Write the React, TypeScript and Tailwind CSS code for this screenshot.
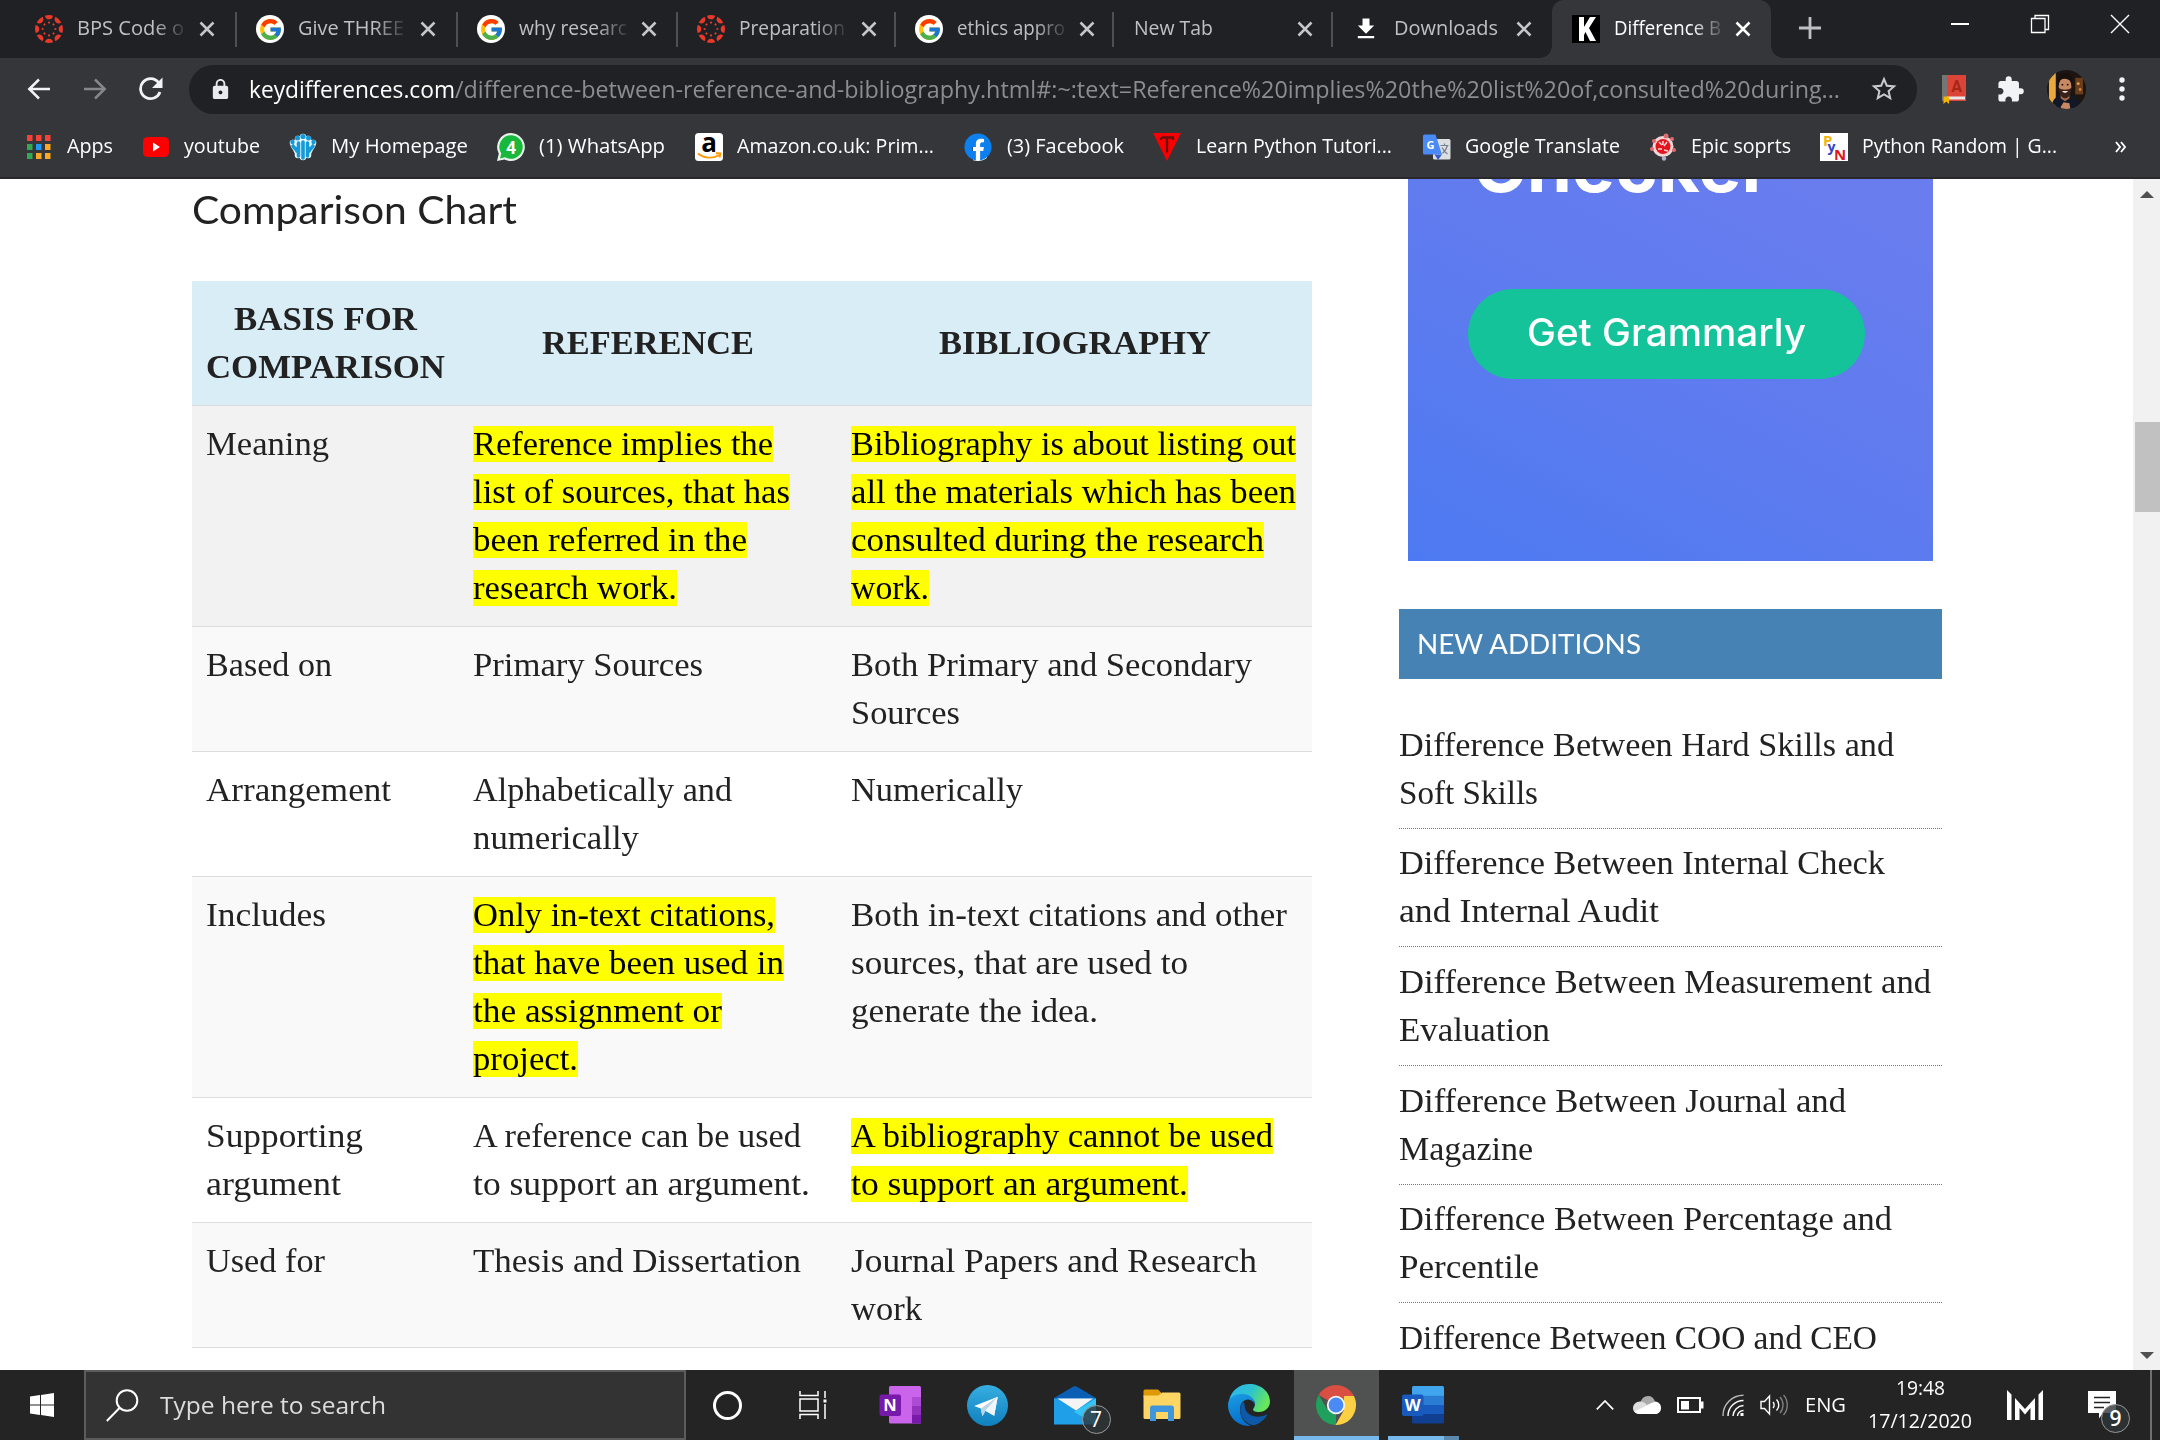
import React, { useLayoutEffect, useRef } from "react";
import { FcGoogle } from "react-icons/fc";
import { FaFacebook } from "react-icons/fa";
import { MdLock, MdStarBorder, MdExtension, MdFileDownload } from "react-icons/md";

/* Single line of text whose glyphs are condensed or expanded to span `w` pixels. */
function Fit({ w, children, className = "" }: { w: number; children: string; className?: string }) {
  const ref = useRef<HTMLSpanElement>(null);
  useLayoutEffect(() => {
    const el = ref.current;
    if (!el) return;
    el.style.transform = "none";
    const natural = el.getBoundingClientRect().width;
    el.style.transform = `scaleX(${w / natural})`;
  }, [w, children]);
  return (
    <span className={`inline-block whitespace-pre text-left ${className}`} style={{ width: w }}>
      <span ref={ref} className="inline-block origin-left">
        {children}
      </span>
    </span>
  );
}

function CanvasIcon() {
  const spokes = [0, 45, 90, 135, 180, 225, 270, 315];
  return (
    <svg viewBox="0 0 28 28" className="size-7">
      <g fill="#e8392b">
        {spokes.map((a) => (
          <g key={a} transform={`rotate(${a} 14 14)`}>
            <path d="M9.900.7a14 14 0 0 1 8.200 0 4.200 4.600 0 0 1-8.200 0z" />
            <circle cx="14" cy="7.600" r="1.100" />
          </g>
        ))}
      </g>
    </svg>
  );
}

function GoogleIcon() {
  return (
    <span className="flex size-7 items-center justify-center rounded-full bg-white">
      <FcGoogle className="size-[25px]" />
    </span>
  );
}

function KIcon() {
  return (
    <svg viewBox="0 0 28 28" className="size-7">
      <rect width="28" height="28" fill="#000" />
      <path d="M7 2h5v10l6-10h6l-7 11 7 13h-6l-4.500-9L12 20v6H7z" fill="#fff" />
    </svg>
  );
}

function Cross({ color }: { color: string }) {
  return (
    <svg viewBox="0 0 16 16" className="size-4 shrink-0">
      <path d="M1.500 1.500l13 13M14.500 1.500l-13 13" stroke={color} strokeWidth="2.500" />
    </svg>
  );
}

const tabs: { text: string; w: number; tab: string; icon: React.ReactNode; fade?: boolean }[] = [
  { text: "BPS Code o", w: 107, tab: "w-[221px]", icon: <CanvasIcon />, fade: true },
  { text: "Give THREE", w: 106, tab: "w-[221px]", icon: <GoogleIcon />, fade: true },
  { text: "why researc", w: 108, tab: "w-[220px]", icon: <GoogleIcon />, fade: true },
  { text: "Preparation", w: 106, tab: "w-[218px]", icon: <CanvasIcon />, fade: true },
  { text: "ethics appro", w: 108, tab: "w-[218px]", icon: <GoogleIcon />, fade: true },
  { text: "New Tab", w: 79, tab: "w-[219px]", icon: null },
  { text: "Downloads", w: 104, tab: "w-[220px]", icon: <MdFileDownload className="size-7 text-white" /> },
];

function TabStrip() {
  return (
    <div className="flex h-[58px] bg-[#202124] pl-[15px] text-[20px] leading-[55px]">
      {tabs.map((t, i) => (
        <div key={t.text} className={`relative flex shrink-0 items-center text-[#bdc1c6] ${t.tab}`}>
          {t.icon && <span className="ml-5 size-7 shrink-0">{t.icon}</span>}
          <span className={t.icon ? "ml-3.5 h-[58px] w-[108px] overflow-hidden" : "ml-[21px] h-[58px] w-[149px]"}>
            <Fit w={t.w} className={t.fade ? "[mask-image:linear-gradient(to_right,#000_72%,rgba(0,0,0,0.15))]" : ""}>
              {t.text}
            </Fit>
          </span>
          <span className="ml-3.5">
            <Cross color="#c4c7cb" />
          </span>
          {i < 6 && <span className="absolute -right-px top-3 h-[35px] w-0.5 bg-[#4e5054]" />}
        </div>
      ))}
      <div className="relative flex w-[219px] shrink-0 items-center rounded-t-[12px] bg-[#35363a] text-white">
        <span className="absolute -left-3 bottom-0 size-3 bg-[radial-gradient(circle_at_0_0,#202124_11.500px,#35363a_12px)]" />
        <span className="absolute -right-3 bottom-0 size-3 bg-[radial-gradient(circle_at_100%_0,#202124_11.500px,#35363a_12px)]" />
        <span className="ml-5">
          <KIcon />
        </span>
        <span className="ml-3.5 h-[58px] w-[108px] overflow-hidden">
          <Fit w={107} className="[mask-image:linear-gradient(to_right,#000_72%,rgba(0,0,0,0.15))]">
            Difference B
          </Fit>
        </span>
        <span className="ml-[13px]">
          <Cross color="#ffffff" />
        </span>
      </div>
      <svg viewBox="0 0 22 22" className="ml-7 mt-[17px] size-[22px]">
        <path d="M11 0v22M0 11h22" stroke="#bdc1c6" strokeWidth="2.800" />
      </svg>
      <div className="ml-auto flex h-12 items-center">
        <span className="flex w-20 justify-center">
          <span className="h-[1.500px] w-[18px] bg-white" />
        </span>
        <span className="flex w-20 justify-center">
          <svg viewBox="0 0 20 20" className="size-5" fill="none" stroke="#fff" strokeWidth="1.300">
            <path d="M1.500 4.500h13.500v14H1.500zM5 4.500v-3h13.500v14H15" />
          </svg>
        </span>
        <span className="flex w-20 justify-center">
          <svg viewBox="0 0 20 20" className="size-5" stroke="#fff" strokeWidth="1.400">
            <path d="M1 1l18 18M19 1L1 19" />
          </svg>
        </span>
      </div>
    </div>
  );
}

function Toolbar() {
  return (
    <div className="flex h-[62px] items-center bg-[#35363a] pl-[27px]">
      <svg viewBox="0 0 24 22" className="h-[22px] w-6" fill="none" stroke="#f1f3f4" strokeWidth="2.500">
        <path d="M23 11H2.500M12 1.500L2.300 11l9.700 9.500" />
      </svg>
      <svg viewBox="0 0 24 22" className="ml-8 h-[22px] w-6" fill="none" stroke="#85878b" strokeWidth="2.500">
        <path d="M1 11h20.500M12 1.500l9.700 9.500-9.700 9.500" />
      </svg>
      <svg viewBox="0 0 26 24" className="ml-[31px] h-6 w-[26px]">
        <path d="M20.500 5.500A10 10 0 1 0 22 15" fill="none" stroke="#f1f3f4" strokeWidth="2.800" />
        <path d="M24.500.5v10.500H14z" fill="#f1f3f4" />
      </svg>
      <div className="ml-[25px] flex h-[49px] w-[1728px] items-center rounded-full bg-[#202124] text-[23px] leading-[48px]">
        <MdLock className="ml-5 size-[23px] text-[#e8eaed]" />
        <span className="ml-[17px] flex h-[49px]">
          <span className="w-[206px] text-white">
            <Fit w={206}>keydifferences.com</Fit>
          </span>
          <span className="w-[1385px] text-[#8b8d91]">
            <Fit w={1385}>
              /difference-between-reference-and-bibliography.html#:~:text=Reference%20implies%20the%20list%20of,consulted%20during...
            </Fit>
          </span>
        </span>
        <MdStarBorder className="ml-[29px] size-[30px] text-[#c8cacd]" />
      </div>
      <svg viewBox="0 0 24 30" className="ml-[25px] h-[30px] w-6">
        <rect x="0" y="1" width="24" height="26" fill="#db4437" />
        <rect x="0" y="1" width="5" height="26" fill="#757575" />
        <rect x="5" y="22.500" width="18" height="3" fill="#e8e8e8" />
        <path d="M1.500 22.500h5.500V30l-2.700-2.500L1.500 30z" fill="#f4b400" />
        <text x="14.500" y="18" fontSize="16" fontWeight="700" textAnchor="middle" fill="#a52714" fontFamily="Roboto, sans-serif">
          A
        </text>
      </svg>
      <MdExtension className="ml-[30px] size-[29px] text-[#f1f3f4]" />
      <svg viewBox="0 0 40 40" className="ml-[22px] size-[39px]">
        <defs>
          <clipPath id="avatar">
            <circle cx="20" cy="20" r="20" />
          </clipPath>
        </defs>
        <g clipPath="url(#avatar)">
          <rect width="40" height="40" fill="#1c1512" />
          <rect x="2" width="7" height="40" fill="#e9a93c" />
          <rect x="29" y="8" width="8" height="17" fill="#6b3d1d" />
          <circle cx="32" cy="14" r="1.500" fill="#e0a050" />
          <circle cx="34" cy="20" r="1.500" fill="#c98038" />
          <path d="M4 40c1-12 8-15 15-15s15 3 16 15z" fill="#131826" />
          <path d="M14 24h9v5l-4.500 3-4.500-3z" fill="#a86b4a" />
          <ellipse cx="18.500" cy="17" rx="6.500" ry="9" fill="#c78862" />
          <path d="M11 14c0-8 3-11 8-11s8 3 7 10c-3-4-9-5-12-3z" fill="#17100d" />
          <path d="M12 18c1 9 4 11 6.500 11s6-2 6.500-11c-2 3-11 3-13 0z" fill="#3a211a" />
          <path d="M15.500 21.500h6c-1 2.500-5 2.500-6 0z" fill="#f3e5dc" />
          <circle cx="15.800" cy="15" r="1" fill="#20130d" />
          <circle cx="21.200" cy="15" r="1" fill="#20130d" />
          <path d="M14 38l3-5 6 1 1 6h-9z" fill="#c78862" />
        </g>
      </svg>
      <svg viewBox="0 0 6 24" className="ml-[33px] h-6 w-1.5" fill="#f1f3f4">
        <circle cx="3" cy="3" r="2.700" />
        <circle cx="3" cy="12" r="2.700" />
        <circle cx="3" cy="21" r="2.700" />
      </svg>
    </div>
  );
}

function Bookmark({ icon, gap, lead, w, children }: { icon: React.ReactNode; gap: string; lead: string; w: number; children: string }) {
  return (
    <div className={`flex items-center ${lead}`}>
      {icon}
      <span className={`flex ${gap}`}>
        <Fit w={w} className="pb-0.5">
          {children}
        </Fit>
      </span>
    </div>
  );
}

function BookmarksBar() {
  const apps = ["#f44336", "#f44336", "#f44336", "#34a853", "#2196f3", "#f9a825", "#34a853", "#f9a825", "#f9a825"];
  return (
    <div className="flex h-[57px] items-center bg-[#35363a] pb-1 text-[20px] leading-[28px] text-white">
      <Bookmark
        lead="ml-[27px]"
        gap="ml-4 w-[46px]"
        w={46}
        icon={
          <svg viewBox="0 0 24 24" className="size-6 shrink-0">
            {apps.map((c, i) => (
              <rect key={i} x={(i % 3) * 9} y={Math.floor(i / 3) * 9} width="5.500" height="6" fill={c} />
            ))}
          </svg>
        }
      >
        Apps
      </Bookmark>
      <Bookmark
        lead="ml-[30px]"
        gap="ml-[15px] w-[76px]"
        w={76}
        icon={
          <svg viewBox="0 0 26 20" className="h-5 w-[26px] shrink-0">
            <rect width="26" height="20" rx="4.500" fill="#f00" />
            <path d="M10 5.500l7 4.500-7 4.500z" fill="#fff" />
          </svg>
        }
      >
        youtube
      </Bookmark>
      <Bookmark
        lead="ml-[29px]"
        gap="ml-[14px] w-[137px]"
        w={137}
        icon={
          <svg viewBox="0 0 28 28" className="size-7 shrink-0" strokeLinecap="round">
            <g stroke="#eaf7fd" strokeWidth="6.500" fill="none">
              <path d="M9 6v16M14 4v20M19 6v16M4 10c1 4 3 5 4 8M24 10c-1 4-3 5-4 8" />
            </g>
            <g fill="#149ad9">
              <circle cx="8.500" cy="5" r="2.500" />
              <circle cx="14" cy="3.500" r="2.600" />
              <circle cx="19.500" cy="5" r="2.500" />
              <circle cx="3.500" cy="9" r="2.200" />
              <circle cx="24.500" cy="9" r="2.200" />
            </g>
            <path d="M9.500 10v13M14 9v16M18.500 10v13M4 13c1 2 3 2.500 4 5M24 13c-1 2-3 2.500-4 5" stroke="#149ad9" strokeWidth="3.600" fill="none" />
          </svg>
        }
      >
        My Homepage
      </Bookmark>
      <Bookmark
        lead="ml-[29px]"
        gap="ml-[14px] w-[126px]"
        w={126}
        icon={
          <svg viewBox="0 0 28 28" className="size-7 shrink-0">
            <path d="M14 0a14 14 0 1 1-6.500 26.500L0 28l1.800-7.300A14 14 0 0 1 14 0z" fill="#e8f5ea" />
            <path d="M14 2.200a11.800 11.800 0 1 1-6 22L3 25.500l1.300-5A11.800 11.800 0 0 1 14 2.200z" fill="#17b83c" />
            <text x="14" y="20.500" fontSize="17" fontWeight="700" textAnchor="middle" fill="#fff" fontFamily="Open Sans, sans-serif">
              4
            </text>
          </svg>
        }
      >
        (1) WhatsApp
      </Bookmark>
      <Bookmark
        lead="ml-[30px]"
        gap="ml-[14px] w-[197px]"
        w={197}
        icon={
          <svg viewBox="0 0 28 28" className="size-7 shrink-0">
            <rect width="28" height="28" rx="3.500" fill="#fff" />
            <text x="14" y="18.500" fontSize="26" fontWeight="700" textAnchor="middle" fill="#000" fontFamily="Open Sans, sans-serif">
              a
            </text>
            <path d="M3 20.500c6 5 15 5.500 21 1.500M21 20l4.500.5-1 4" fill="none" stroke="#f90" strokeWidth="1.900" />
          </svg>
        }
      >
        Amazon.co.uk: Prim...
      </Bookmark>
      <Bookmark
        lead="ml-[30px]"
        gap="ml-[15px] w-[117px]"
        w={117}
        icon={
          <span className="flex size-7 shrink-0 items-center justify-center rounded-full bg-[linear-gradient(#fff,#fff)] bg-[length:14px_24px] bg-[position:9px_4px] bg-no-repeat">
            <FaFacebook className="size-7 text-[#0c80ee]" />
          </span>
        }
      >
        (3) Facebook
      </Bookmark>
      <Bookmark
        lead="ml-[29px]"
        gap="ml-[15px] w-[196px]"
        w={196}
        icon={
          <svg viewBox="0 0 28 28" className="size-7 shrink-0">
            <path d="M0 0h28L14 28z" fill="#f80000" />
            <path d="M8 4.500h12v2.500M8 7v-2.500M14 4.500v15" stroke="#6b0d0d" strokeWidth="2.300" fill="none" />
          </svg>
        }
      >
        Learn Python Tutori...
      </Bookmark>
      <Bookmark
        lead="ml-[31px]"
        gap="ml-[14px] w-[155px]"
        w={155}
        icon={
          <svg viewBox="0 0 28 28" className="size-7 shrink-0">
            <rect x="10" y="6" width="17.500" height="20.500" rx="1.500" fill="#dcdfe2" />
            <path d="M11.500 21.500h7.500L15 27z" fill="#3a5bc7" />
            <path d="M1.500 1.500h11L19 21.500H1.500A1.500 1.500 0 0 1 0 20V3a1.500 1.500 0 0 1 1.500-1.500z" fill="#4a8af4" />
            <text x="7.500" y="15.500" fontSize="11" fontWeight="700" textAnchor="middle" fill="#fff" fontFamily="Open Sans, sans-serif">
              G
            </text>
            <path d="M17.500 12.500h8M21.500 10.500v2M24.500 12.500c-1 4-3 6-5 8M19 14.500c1.500 3 3 5 5.500 6.500" stroke="#75808c" strokeWidth="1.200" fill="none" />
          </svg>
        }
      >
        Google Translate
      </Bookmark>
      <Bookmark
        lead="ml-[29px]"
        gap="ml-[14px] w-[100px]"
        w={100}
        icon={
          <svg viewBox="0 0 28 28" className="size-7 shrink-0">
            <circle cx="14" cy="13.500" r="10.500" fill="#f6d5d6" />
            <g fill="#e06c72">
              <circle cx="17" cy="3" r="2.500" />
              <circle cx="23" cy="6" r="2" />
              <circle cx="5" cy="8" r="2" />
              <circle cx="3" cy="16" r="2" />
              <circle cx="25" cy="17" r="2" />
            </g>
            <circle cx="14" cy="13.500" r="7.500" fill="#e3141c" />
            <path d="M10 9l3 3M18 9l-3 4M9 16h4M15 17l4 1M14 8v4" stroke="#fbd6d6" strokeWidth="1.500" />
            <circle cx="15" cy="25.500" r="2.200" fill="#aeb0c8" />
          </svg>
        }
      >
        Epic soprts
      </Bookmark>
      <Bookmark
        lead="ml-[29px]"
        gap="ml-[14px] w-[195px]"
        w={195}
        icon={
          <svg viewBox="0 0 28 28" className="size-7 shrink-0" fontFamily="Open Sans, sans-serif" fontWeight="700">
            <rect width="28" height="28" fill="#fff" />
            <text x="3" y="12.500" fontSize="15" fill="#f2b50c">
              P
            </text>
            <text x="7.500" y="18.500" fontSize="14" fill="#3344c4">
              y
            </text>
            <text x="14" y="26.500" fontSize="15" fill="#e0141c">
              N
            </text>
          </svg>
        }
      >
        Python Random | G...
      </Bookmark>
      <svg viewBox="0 0 11 12" className="ml-[58px] h-3 w-[11px]" fill="none" stroke="#fff" strokeWidth="1.900">
        <path d="M1 1l4 5-4 5M6 1l4 5-4 5" />
      </svg>
    </div>
  );
}

type Cell = { lines: [string, number][]; mark?: boolean };
const rows: { bg: string; cells: [Cell, Cell, Cell] }[] = [
  {
    bg: "bg-[#f2f2f2]",
    cells: [
      { lines: [["Meaning", 123]] },
      { mark: true, lines: [["Reference implies the", 300], ["list of sources, that has", 317], ["been referred in the", 274], ["research work.", 204]] },
      { mark: true, lines: [["Bibliography is about listing out", 445], ["all the materials which has been", 445], ["consulted during the research", 413], ["work.", 78]] },
    ],
  },
  {
    bg: "bg-[#f9f9f9]",
    cells: [
      { lines: [["Based on", 126]] },
      { lines: [["Primary Sources", 230]] },
      { lines: [["Both Primary and Secondary", 401], ["Sources", 109]] },
    ],
  },
  {
    bg: "bg-white",
    cells: [
      { lines: [["Arrangement", 185]] },
      { lines: [["Alphabetically and", 259], ["numerically", 166]] },
      { lines: [["Numerically", 172]] },
    ],
  },
  {
    bg: "bg-[#f9f9f9]",
    cells: [
      { lines: [["Includes", 120]] },
      { mark: true, lines: [["Only in-text citations,", 302], ["that have been used in", 311], ["the assignment or", 249], ["project.", 105]] },
      { lines: [["Both in-text citations and other", 436], ["sources, that are used to", 337], ["generate the idea.", 247]] },
    ],
  },
  {
    bg: "bg-white",
    cells: [
      { lines: [["Supporting", 157], ["argument", 135]] },
      { lines: [["A reference can be used", 328], ["to support an argument.", 337]] },
      { mark: true, lines: [["A bibliography cannot be used", 422], ["to support an argument.", 337]] },
    ],
  },
  {
    bg: "bg-[#f9f9f9]",
    cells: [
      { lines: [["Used for", 119]] },
      { lines: [["Thesis and Dissertation", 328]] },
      { lines: [["Journal Papers and Research", 406], ["work", 71]] },
    ],
  },
];

function TableCell({ cell }: { cell: Cell }) {
  return (
    <div className="px-3.5 py-3.5">
      {cell.lines.map(([text, w]) => (
        <div key={text} className="h-12">
          <Fit
            w={w}
            className={cell.mark ? "bg-[linear-gradient(#ff0,#ff0)] bg-[length:100%_36px] bg-center bg-no-repeat text-black" : ""}
          >
            {text}
          </Fit>
        </div>
      ))}
    </div>
  );
}

function ComparisonTable() {
  return (
    <div className="mt-[48px] font-['Liberation_Serif',serif] text-[34px] leading-[48px] text-[#222]">
      <div className="grid h-[124px] grid-cols-[267px_378px_475px] items-center bg-[#d9edf7] text-center font-bold">
        <div>
          <div className="h-12">
            <Fit w={183}>BASIS FOR</Fit>
          </div>
          <div className="h-12">
            <Fit w={239}>COMPARISON</Fit>
          </div>
        </div>
        <div className="h-12">
          <Fit w={212}>REFERENCE</Fit>
        </div>
        <div className="h-12">
          <Fit w={272}>BIBLIOGRAPHY</Fit>
        </div>
      </div>
      {rows.map((r, i) => (
        <div key={i} className={`grid grid-cols-[267px_378px_475px] border-t border-[#ddd] ${r.bg}`}>
          {r.cells.map((c, j) => (
            <TableCell key={j} cell={c} />
          ))}
        </div>
      ))}
      <div className="h-px bg-[#ddd]" />
    </div>
  );
}

const additions: [string, number][][] = [
  [["Difference Between Hard Skills and", 495], ["Soft Skills", 139]],
  [["Difference Between Internal Check", 486], ["and Internal Audit", 260]],
  [["Difference Between Measurement and", 532], ["Evaluation", 151]],
  [["Difference Between Journal and", 447], ["Magazine", 134]],
  [["Difference Between Percentage and", 493], ["Percentile", 140]],
  [["Difference Between COO and CEO", 478]],
];

function Sidebar() {
  return (
    <div className="ml-[87px] w-[543px]">
      <div className="ml-[9px] h-[382px] w-[525px] overflow-hidden bg-[linear-gradient(28deg,#4d7af2_0%,#5d7bef_45%,#6b7dee_100%)] font-['Inter',sans-serif] text-white">
        <div className="-mt-[52px] ml-[65px] h-20 text-[72px] font-bold leading-[78px]">
          <Fit w={298}>Checker</Fit>
        </div>
        <div className="ml-[60px] mt-[82px] flex h-[90px] w-[397px] justify-center rounded-full bg-[#15c39a] text-[38px] font-medium leading-[87px]">
          <Fit w={279}>Get Grammarly</Fit>
        </div>
      </div>
      <div className="mt-12 h-[70px] bg-[#4682b4] pl-[18px] font-['Lato',sans-serif] text-[27px] leading-[69px] text-white">
        <Fit w={224}>NEW ADDITIONS</Fit>
      </div>
      <div className="mt-[31px] font-['Liberation_Serif',serif] text-[34px] leading-[48px] text-[#222]">
        {additions.map((lines, i) => (
          <div key={i} className="border-b border-dotted border-[#777] pb-[11.200px] pt-[10.500px]">
            {lines.map(([text, w]) => (
              <div key={text} className="h-12">
                <Fit w={w}>{text}</Fit>
              </div>
            ))}
          </div>
        ))}
      </div>
    </div>
  );
}

function Page() {
  return (
    <div className="flex h-[1191px] overflow-hidden bg-white pl-48">
      <div className="w-[1120px]">
        <div className="mt-[6px] h-12 font-['Lato',sans-serif] text-[38px] leading-[48px] text-[#222]">
          <Fit w={325}>Comparison Chart</Fit>
        </div>
        <ComparisonTable />
      </div>
      <Sidebar />
      <div className="ml-auto flex w-[27px] flex-col items-center bg-[#f1f1f1]">
        <svg viewBox="0 0 14 7" className="mt-3 h-[7px] w-3.5" fill="#505050">
          <path d="M7 0l7 7H0z" />
        </svg>
        <div className="ml-0.5 mt-56 h-[90px] w-[25px] bg-[#c1c1c1]" />
        <svg viewBox="0 0 14 7" className="mb-[11px] mt-auto h-[7px] w-3.5" fill="#505050">
          <path d="M0 0h14L7 7z" />
        </svg>
      </div>
    </div>
  );
}

function OneNoteIcon() {
  return (
    <svg viewBox="0 0 42 38" className="h-[38px] w-[42px]">
      <rect x="10" width="32" height="37.500" rx="1.500" fill="#ca64ea" />
      <rect x="33" y="11" width="9" height="9" fill="#ae4bd5" />
      <rect x="33" y="20" width="9" height="8.500" fill="#9332bf" />
      <path d="M33 28.500h9V36a1.500 1.500 0 0 1-1.500 1.500H33z" fill="#7719aa" />
      <rect x=".5" y="8.500" width="21.500" height="21.500" rx="2" fill="#7719aa" />
      <text x="11" y="25" fontSize="16.500" fontWeight="700" textAnchor="middle" fill="#fff" fontFamily="Open Sans, sans-serif">
        N
      </text>
    </svg>
  );
}

function TelegramIcon() {
  return (
    <svg viewBox="0 0 40 40" className="size-[41px]">
      <defs>
        <linearGradient id="tg" x1="0" y1="0" x2="0" y2="1">
          <stop offset="0" stopColor="#37aee2" />
          <stop offset="1" stopColor="#0f80bd" />
        </linearGradient>
      </defs>
      <circle cx="20" cy="20" r="20" fill="url(#tg)" />
      <path d="M7 20.500L30 11.500l-3.500 18.500-8.500-5-3 5.500-1.500-7.500z" fill="#fff" />
      <path d="M13.500 23L30 11.500 18 25l-3 5.500z" fill="#b9d4e6" />
      <path d="M18 25L30 11.500l-3.500 18.500z" fill="#eef6fb" />
    </svg>
  );
}

function Badge({ className, children }: { className: string; children: string }) {
  return (
    <span
      className={`absolute flex size-[29px] items-center justify-center rounded-full border border-[#999] bg-[#2e3438]/80 text-[21px] leading-none text-white ${className}`}
    >
      {children}
    </span>
  );
}

function MailIcon() {
  return (
    <span className="relative">
      <svg viewBox="0 0 42 39" className="h-[39px] w-[42px]">
        <path d="M0 12L18.500 1a4.500 4.500 0 0 1 5 0L42 12v4H0z" fill="#0a5fb4" />
        <path d="M0 12.500h42v26H0z" fill="#1f9fe8" />
        <path d="M42 12.500v26L20 26z" fill="#35c4f4" />
        <path d="M3.500 12.500h35.500L22 24.500z" fill="#f4f4f4" />
      </svg>
      <Badge className="-bottom-[9px] left-7">7</Badge>
    </span>
  );
}

function FolderIcon() {
  return (
    <svg viewBox="0 0 38 33" className="h-[33px] w-[38px]">
      <path d="M.5 2A1.500 1.500 0 0 1 2 .5h13l3 3V8H.5z" fill="#dd9a05" />
      <path d="M.5 6.500h15L19 3.500h17A1.500 1.500 0 0 1 37.500 5v23.500A1.500 1.500 0 0 1 36 30H2a1.500 1.500 0 0 1-1.500-1.500z" fill="#ffd563" />
      <path d="M7 32V19a2.500 2.500 0 0 1 2.500-2.500h19A2.500 2.500 0 0 1 31 19v13h-6v-9H13v9z" fill="#3e96dd" />
    </svg>
  );
}

function EdgeIcon() {
  return (
    <svg viewBox="0 0 42 42" className="size-[42px]">
      <defs>
        <linearGradient id="e1" x1="0" y1="0" x2="1" y2=".4">
          <stop offset="0" stopColor="#2fb4ef" />
          <stop offset=".55" stopColor="#2cc3cf" />
          <stop offset="1" stopColor="#66e65c" />
        </linearGradient>
        <linearGradient id="e2" x1="0" y1="0" x2=".3" y2="1">
          <stop offset="0" stopColor="#1b9de2" />
          <stop offset="1" stopColor="#0570cf" />
        </linearGradient>
      </defs>
      <path d="M1 17C3 6 12 0 21.500 0 33 0 42 8 42 17.500c0 6-5 10.500-11 10.500-4.500 0-6-1.500-6-2.500s2-2.500 2-5.500c0-4-4-7.500-10-8C9 11.500 3 14 1 17z" fill="url(#e1)" />
      <path d="M0 21c0-7 6-11 14-11 8 0 13 5 13 10.500-1.500-3.500-4.500-5-7.500-5C14 16 12 21 12 26c0 8 5 13.500 11 15.800C10 43 0 33 0 21z" fill="url(#e2)" />
      <path d="M15.500 17.500C11 22 11 30 16 36c3 3.500 8 6 11 5 5-1.700 9-5 12-9.500.4-.7-.4-1.200-1-.8-9 4.500-19.500 1-21-7-.4-2-.3-4-1.500-6.200z" fill="#0e58a8" />
    </svg>
  );
}

function ChromeIcon() {
  return (
    <svg viewBox="0 0 40 40" className="size-10">
      <path d="M20 20L2.700 10A20 20 0 0 1 37.300 10z" fill="#db4e42" />
      <path d="M20 20L20 40A20 20 0 0 1 2.700 10L11 24z" fill="#1fa15d" />
      <path d="M28 11h9.900A20 20 0 0 1 19.500 40L28 25z" fill="#fdcf42" />
      <path d="M20 11h17.900L36 8 20 8z" fill="#db4e42" />
      <circle cx="20" cy="20" r="9.200" fill="#f4f4f4" />
      <circle cx="20" cy="20" r="7.400" fill="#4a8af4" />
    </svg>
  );
}

function WordIcon() {
  return (
    <svg viewBox="0 0 42 38" className="h-[38px] w-[42px]">
      <path d="M10 1.500A1.500 1.500 0 0 1 11.500 0h29A1.500 1.500 0 0 1 42 1.500V10H10z" fill="#41a5ee" />
      <rect x="10" y="9.800" width="32" height="9.200" fill="#2b7cd3" />
      <rect x="10" y="19" width="32" height="9.200" fill="#185abd" />
      <path d="M10 28h32v8a1.500 1.500 0 0 1-1.500 1.500h-29A1.500 1.500 0 0 1 10 36z" fill="#103f91" />
      <rect y="8.500" width="21.500" height="21.500" rx="2" fill="#185abd" />
      <text x="10.700" y="25" fontSize="16.500" fontWeight="700" textAnchor="middle" fill="#fff" fontFamily="Open Sans, sans-serif">
        W
      </text>
    </svg>
  );
}

function Taskbar() {
  const cell = "flex h-full w-[87.300px] shrink-0 items-center justify-center";
  return (
    <div className="flex h-[70px] items-center bg-[#232423] text-white">
      <div className="flex w-[84px] shrink-0 justify-center">
        <svg viewBox="0 0 24 24" className="size-6" fill="#fff">
          <path d="M0 3.400L10 2v9.500H0zM11 1.900L24 0v11.500H11zM0 12.500h10V22L0 20.600zM11 12.500h13V24l-13-1.900z" />
        </svg>
      </div>
      <div className="flex h-[70px] w-[602px] shrink-0 items-center border-2 border-[#5c5c5c] bg-[#333]">
        <svg viewBox="0 0 33 33" className="ml-5 size-[33px]" fill="none" stroke="#fff" strokeWidth="2">
          <circle cx="21" cy="11.500" r="10.300" />
          <path d="M13.500 19L.8 32" />
        </svg>
        <span className="ml-[21px] flex text-[23.500px] leading-8 text-[#dcdcdc]">
          <Fit w={226}>Type here to search</Fit>
        </span>
      </div>
      <div className="flex h-full w-[83px] shrink-0 items-center justify-center">
        <span className="size-[29px] rounded-full border-[3.500px] border-white" />
      </div>
      <div className={cell}>
        <svg viewBox="0 0 28 28" className="size-7" fill="none" stroke="#fff" strokeWidth="1.500">
          <path d="M1 0v4.500h18V0M1 8h18v12H1zM1 28v-4.500h18V28M26 0v7M26 13v15" />
          <rect x="24.500" y="8.500" width="3" height="3" fill="#fff" stroke="none" />
        </svg>
      </div>
      <div className={cell}>
        <OneNoteIcon />
      </div>
      <div className={cell}>
        <TelegramIcon />
      </div>
      <div className={cell}>
        <MailIcon />
      </div>
      <div className={cell}>
        <FolderIcon />
      </div>
      <div className={cell}>
        <EdgeIcon />
      </div>
      <div className="ml-px flex h-full w-[85px] shrink-0 items-center justify-center border-b-4 border-[#76b9ed] bg-[#505151] pt-1">
        <ChromeIcon />
      </div>
      <div className="ml-[9px] flex h-full w-[71px] shrink-0 flex-col">
        <span className="flex h-[66px] w-[70px] items-center justify-center pt-1">
          <WordIcon />
        </span>
        <span className="flex h-1">
          <span className="w-14 bg-[#76b9ed]" />
          <span className="w-[15px] bg-[#5b89ad]" />
        </span>
      </div>

      <div className="ml-auto flex h-full items-center">
        <svg viewBox="0 0 18 10" className="h-2.5 w-[18px]" fill="none" stroke="#fff" strokeWidth="1.700">
          <path d="M.8 9.300L9 1l8.200 8.300" />
        </svg>
        <svg viewBox="0 0 28 18" className="ml-[19px] h-[18px] w-7">
          <path d="M7 7.500C8 3 11 0 15 0c3.500 0 6 2 7 5.500L15 11z" fill="#a9a9a9" />
          <path d="M22 5.500c4 .5 6 3 6 6.500 0 3.500-2.500 6-6 6H6L14 9z" fill="#fff" />
          <path d="M7 5.500c3 0 5 1.500 7 3.500l9 9H6.500C2.500 18 0 15.500 0 12c0-3.500 3-6.500 7-6.500z" fill="#dedede" />
          <path d="M1.500 15.500L14 9.500l12 6.500c-1 1.400-2.500 2-4 2H6.500c-2 0-4-1-5-2.500z" fill="#fff" />
        </svg>
        <svg viewBox="0 0 27 16" className="ml-4 h-4 w-[27px]">
          <rect x="1" y="1" width="22" height="14" fill="none" stroke="#fff" strokeWidth="2" />
          <rect x="24" y="4.500" width="2.500" height="7" fill="#fff" />
          <rect x="4" y="4" width="8" height="8.500" fill="#fff" />
        </svg>
        <svg viewBox="0 0 22 22" className="ml-[18px] size-[22px]" fill="none" stroke="#fff" strokeWidth="1.400">
          <path d="M1 22A20.500 20.500 0 0 1 21.500 1.200" stroke="#b9b9b9" />
          <path d="M6 22A15.500 15.500 0 0 1 21.500 6.500M11 22A11 11 0 0 1 21.500 11.500M15.500 22A6 6 0 0 1 21.500 16.500" />
          <rect x="18.500" y="19" width="3" height="3" fill="#fff" stroke="none" />
        </svg>
        <svg viewBox="0 0 28 22" className="ml-4 h-[22px] w-7" fill="none" stroke="#fff" strokeWidth="1.400">
          <path d="M1 7.500h3.500L9.500 2v18l-5-5.500H1z" />
          <path d="M13 8c1.500 1.500 1.500 4.500 0 6M16.500 5.500c3 3 3 8 0 11" />
          <path d="M20 3c4 4.500 4 11.500 0 16M23.500 1c5 5.500 5 14.500 0 20" stroke="#7d7d7d" />
        </svg>
        <span className="ml-[17px] flex w-[41px] text-[20px]">
          <Fit w={41}>ENG</Fit>
        </span>
        <span className="ml-[22px] flex h-full w-[104px] flex-col items-center pt-px text-[20px] leading-[33px]">
          <Fit w={49}>19:48</Fit>
          <Fit w={104}>17/12/2020</Fit>
        </span>
        <svg viewBox="0 0 36 30" className="ml-[35px] h-[30px] w-9" fill="#fff">
          <path d="M0 0l4.500 4.500V30H0zM36 0l-4.500 4.500V30H36zM8 8l10 11L28 8v22h-4.500V18L18 24.500 12.500 18v12H8z" />
        </svg>
        <span className="relative ml-[45px] h-7 w-7">
          <svg viewBox="0 0 28 28" className="size-7">
            <path d="M0 0h28v22H15l-4 5.500V22H0z" fill="#fff" />
            <path d="M6 6.500h16M6 11.500h16M6 16.500h10" stroke="#222" strokeWidth="1.700" />
          </svg>
          <Badge className="left-[13px] top-[13px] font-semibold">9</Badge>
        </span>
        <span className="ml-[34px] mr-2 h-full w-0.5 bg-[#6f6f6f]" />
      </div>
    </div>
  );
}

export default function App() {
  return (
    <div className="h-[1440px] w-[2160px] overflow-hidden bg-white font-['Open_Sans',sans-serif]">
      <TabStrip />
      <Toolbar />
      <BookmarksBar />
      <div className="h-0.5 bg-[#29292c]" />
      <Page />
      <Taskbar />
    </div>
  );
}
